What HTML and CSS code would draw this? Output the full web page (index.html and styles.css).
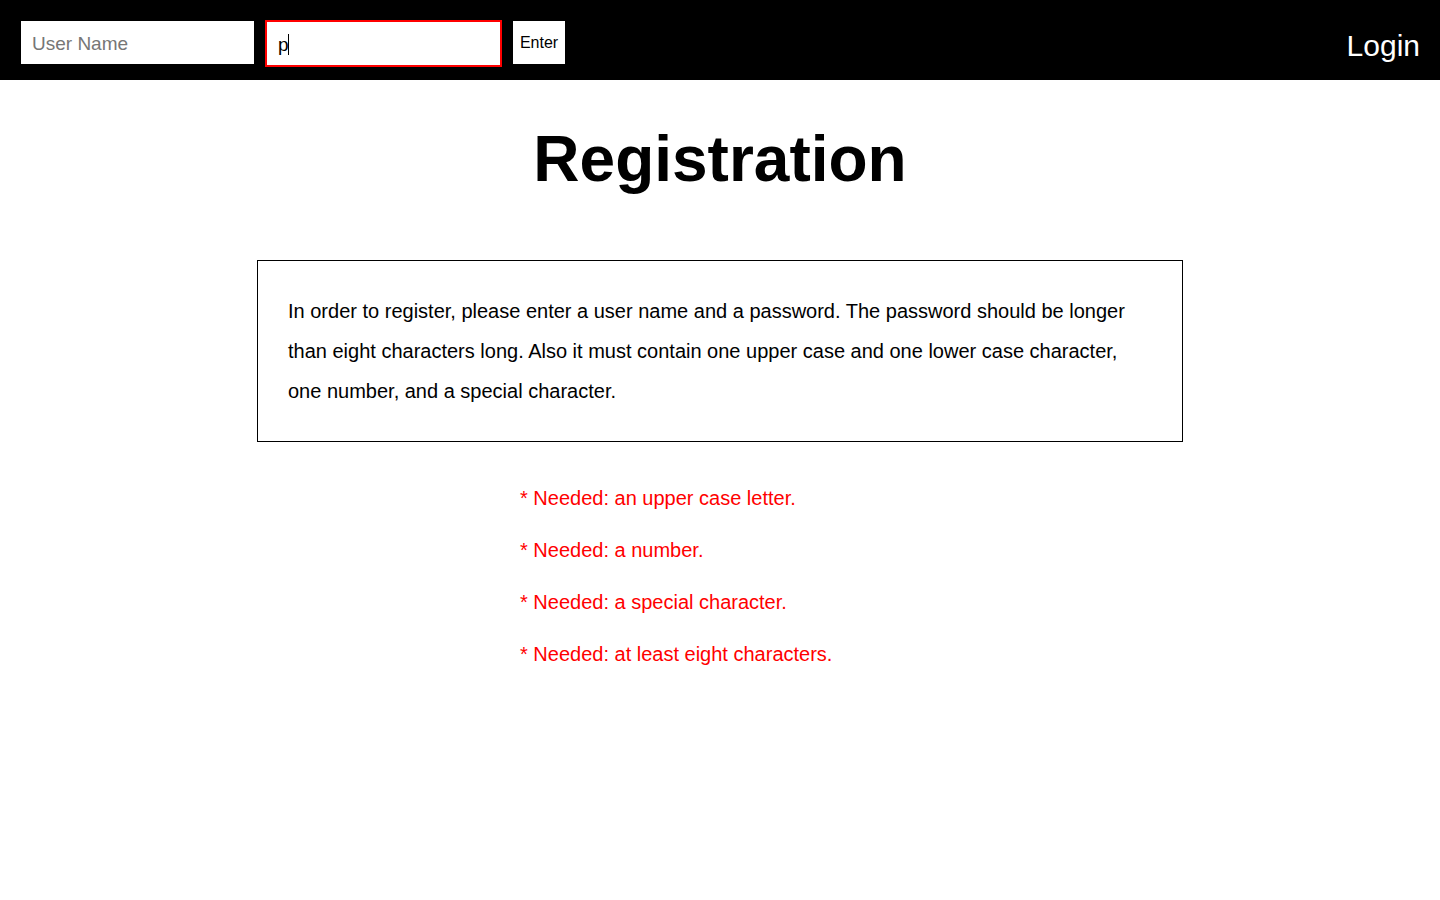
FILE: index.html
```html
<!DOCTYPE html>
<html lang="en">
<head>
<meta charset="utf-8">
<title>Registration</title>
<link rel="stylesheet" href="styles.css">
</head>
<body>
<header class="topbar">
  <form class="reg-form" onsubmit="return false">
    <input class="field" type="text" placeholder="User Name">
    <span class="field-wrap">
      <input class="field field-error" type="text" value="p">
      <span class="caret"></span>
    </span>
    <button class="enter-btn" type="submit">Enter</button>
  </form>
  <a class="login-link" href="#">Login</a>
</header>
<main class="content">
  <h1 class="title">Registration</h1>
  <div class="info-box">
    <p class="info-text">In order to register, please enter a user name and a password. The password should be longer than eight characters long. Also it must contain one upper case and one lower case character, one number, and a special character.</p>
  </div>
  <ul class="errors">
    <li class="error">* Needed: an upper case letter.</li>
    <li class="error">* Needed: a number.</li>
    <li class="error">* Needed: a special character.</li>
    <li class="error">* Needed: at least eight characters.</li>
  </ul>
</main>
</body>
</html>
```

FILE: styles.css
```css
* { box-sizing: border-box; }

body {
  margin: 0;
  font-family: "Liberation Sans", Arial, sans-serif;
  background: #fff;
  color: #000;
}

.topbar {
  height: 80px;
  background: #000;
  display: flex;
  justify-content: space-between;
  align-items: flex-start;
  padding: 0 20px 0 21px;
}

.reg-form {
  display: flex;
  align-items: flex-start;
  gap: 11px;
  margin-top: 21px;
}

.field {
  display: block;
  width: 233px;
  height: 43px;
  border: none;
  background: #fff;
  padding: 2px 11px 0;
  font-family: "Liberation Sans", Arial, sans-serif;
  font-size: 19px;
  color: #000;
  outline: none;
}

.field::placeholder { color: #767676; }

.field-wrap {
  position: relative;
  display: block;
  margin-top: -1px;
}

.field-error {
  width: 237px;
  height: 47px;
  border: 2px solid #ff0000;
  padding: 2px 11px 0;
}

.caret {
  position: absolute;
  left: 23px;
  top: 14px;
  width: 1px;
  height: 21px;
  background: #000;
}

.enter-btn {
  height: 43px;
  width: 52px;
  border: none;
  background: #fff;
  font-family: "Liberation Sans", Arial, sans-serif;
  font-size: 16px;
  color: #000;
  padding: 1px 0 0;
}

.login-link {
  color: #fff;
  text-decoration: none;
  font-size: 30px;
  margin-top: 29px;
  line-height: 34px;
}

.content {
  display: flex;
  flex-direction: column;
  align-items: center;
}

.title {
  font-size: 64px;
  font-weight: bold;
  margin: 42px 0 0;
  line-height: 74px;
  text-align: center;
}

.info-box {
  width: 60%;
  margin-top: 64px;
  border: 1px solid #000;
  padding: 30px;
  box-sizing: content-box;
}

.info-text {
  margin: 0;
  font-size: 20px;
  line-height: 40px;
}

.errors {
  list-style: none;
  width: 400px;
  margin: 40px 0 0;
  padding: 0;
  display: flex;
  flex-direction: column;
  gap: 20px;
}

.error {
  color: #ff0000;
  font-size: 20px;
  line-height: 32px;
}
```
